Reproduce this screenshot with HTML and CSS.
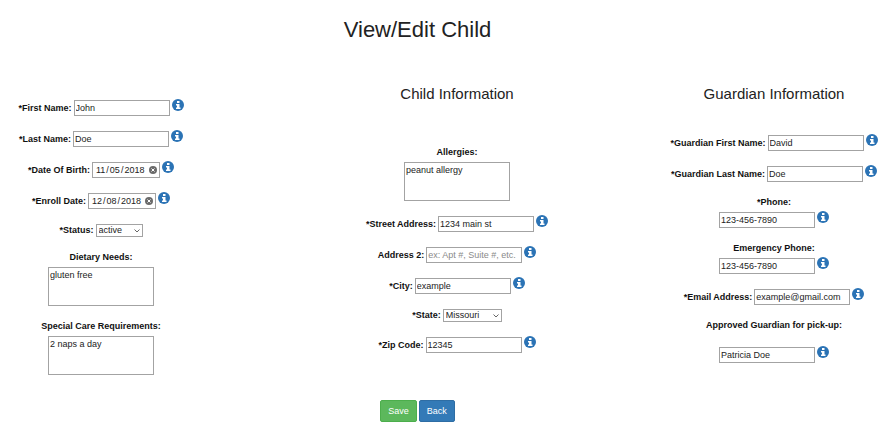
FILE: index.html
```html
<!DOCTYPE html>
<html lang="en-US">
<head>
<meta charset="utf-8">
<title>View/Edit Child</title>
<link rel="stylesheet" href="styles.css">
</head>
<body>
<svg class="sprite" aria-hidden="true">
  <symbol id="info" viewBox="0 0 24 24">
    <circle cx="12" cy="12" r="12" fill="#2b73b5"/>
    <path d="M10 4h5v4h-5zM8 10h7v7h2v3H8v-3h2v-4H8z" fill="#fff"/>
  </symbol>
  <symbol id="clear" viewBox="0 0 16 16">
    <circle cx="8" cy="8" r="8" fill="#6b6b6b"/>
    <path d="M5 5l6 6M11 5l-6 6" stroke="#fff" stroke-width="2"/>
  </symbol>
</svg>
<form class="page">
  <h1>View/Edit Child</h1>
  <div class="columns">
    <section class="column column-child">
      <div class="field"><label for="first">*First Name:</label><input id="first" type="text" value="John"><svg class="info"><use href="#info"/></svg></div>
      <div class="field"><label for="last">*Last Name:</label><input id="last" type="text" value="Doe"><svg class="info"><use href="#info"/></svg></div>
      <div class="field"><label for="dob">*Date Of Birth:</label><span class="date"><input id="dob" type="date" value="2018-11-05"><button class="clear" type="button" aria-label="Clear"><svg><use href="#clear"/></svg></button></span><svg class="info"><use href="#info"/></svg></div>
      <div class="field"><label for="enroll">*Enroll Date:</label><span class="date"><input id="enroll" type="date" value="2018-12-08"><button class="clear" type="button" aria-label="Clear"><svg><use href="#clear"/></svg></button></span><svg class="info"><use href="#info"/></svg></div>
      <div class="field field-select"><label for="status">*Status:</label><span class="picker"><select id="status"><option>active</option></select><svg class="chevron" viewBox="0 0 6 4"><path d="M.5.5L3 3 5.500.5"/></svg></span></div>
      <div class="stacked"><label for="diet">Dietary Needs:</label><textarea id="diet">gluten free</textarea></div>
      <div class="stacked"><label for="care">Special Care Requirements:</label><textarea id="care">2 naps a day</textarea></div>
    </section>
    <section class="column column-info">
      <h2>Child Information</h2>
      <div class="stacked allergies"><label for="allergies">Allergies:</label><textarea id="allergies">peanut allergy</textarea></div>
      <div class="field"><label for="street">*Street Address:</label><input id="street" type="text" value="1234 main st"><svg class="info"><use href="#info"/></svg></div>
      <div class="field"><label for="address2">Address 2:</label><input id="address2" type="text" placeholder="ex: Apt #, Suite #, etc."><svg class="info"><use href="#info"/></svg></div>
      <div class="field"><label for="city">*City:</label><input id="city" type="text" value="example"><svg class="info"><use href="#info"/></svg></div>
      <div class="field field-select"><label for="state">*State:</label><span class="picker picker-wide"><select id="state"><option>Missouri</option></select><svg class="chevron" viewBox="0 0 6 4"><path d="M.5.5L3 3 5.500.5"/></svg></span></div>
      <div class="field"><label for="zip">*Zip Code:</label><input id="zip" type="text" value="12345"><svg class="info"><use href="#info"/></svg></div>
    </section>
    <section class="column column-guardian">
      <h2>Guardian Information</h2>
      <div class="field field-first"><label for="gfirst">*Guardian First Name:</label><input id="gfirst" type="text" value="David"><svg class="info"><use href="#info"/></svg></div>
      <div class="field"><label for="glast">*Guardian Last Name:</label><input id="glast" type="text" value="Doe"><svg class="info"><use href="#info"/></svg></div>
      <div class="stacked"><label for="phone">*Phone:</label><div class="control"><input id="phone" type="tel" value="123-456-7890"><svg class="info"><use href="#info"/></svg></div></div>
      <div class="stacked"><label for="ephone">Emergency Phone:</label><div class="control"><input id="ephone" type="tel" value="123-456-7890"><svg class="info"><use href="#info"/></svg></div></div>
      <div class="field"><label for="email">*Email Address:</label><input id="email" type="email" value="example@gmail.com"><svg class="info"><use href="#info"/></svg></div>
      <div class="stacked stacked-loose"><label for="pickup">Approved Guardian for pick-up:</label><div class="control"><input id="pickup" type="text" value="Patricia Doe"><svg class="info"><use href="#info"/></svg></div></div>
    </section>
  </div>
  <div class="actions"><button class="btn btn-save" type="submit">Save</button><button class="btn btn-back" type="button">Back</button></div>
</form>
</body>
</html>
```
FILE: styles.css
```css
* { box-sizing: border-box; }
body {
  margin: 0;
  background: #fff;
  color: #222;
  font: 9px/12px "Liberation Sans", Arial, sans-serif;
}
.sprite { position: absolute; width: 0; height: 0; }
h1, h2 { margin: 0; font-weight: 400; text-align: center; }
h1 { padding: 16px 46px 0 0; font-size: 22px; line-height: 28px; }
h2 { font-size: 15px; line-height: 20px; }
.columns { display: grid; grid-template-columns: 202fr 465fr 214fr; padding-top: 40px; }
.column-child { padding-top: 16px; }
.column-info { padding-left: 45px; }

.field, .control { display: flex; justify-content: center; gap: 2px; }
.field { margin-top: 15px; }
.column-child .field:first-child { margin-top: 0; }
.column-guardian .field-first { margin-top: 31px; }
label { color: #111; font-weight: 700; white-space: nowrap; }
.field label { line-height: 16px; }
.field-select label { line-height: 13px; }

input, textarea, select {
  margin: 0;
  border: 1px solid #a3a3a3;
  border-radius: 0;
  background: #fff;
  color: #222;
  font: inherit;
}
input { width: 96px; height: 16px; padding: 0 1px; }
input::placeholder { color: #8a8a8a; }
textarea { display: block; width: 106px; height: 39px; padding: 1px; resize: none; }
.info { flex: none; width: 12px; height: 12px; margin-top: -1px; }

.date { position: relative; }
.date input { display: block; width: 68px; padding: 0 3px; }
input::-webkit-calendar-picker-indicator { display: none; }
input::-webkit-datetime-edit,
input::-webkit-datetime-edit-fields-wrapper,
input::-webkit-datetime-edit-month-field,
input::-webkit-datetime-edit-day-field,
input::-webkit-datetime-edit-year-field { padding: 0; }
input::-webkit-datetime-edit-text { padding: 0 1px; }
.clear {
  position: absolute;
  top: 4px;
  right: 3px;
  width: 8px;
  height: 8px;
  padding: 0;
  border: 0;
  background: none;
}
.clear svg { display: block; width: 8px; height: 8px; }

.picker { position: relative; width: 47px; }
.picker-wide { width: 59px; }
select { display: block; width: 100%; height: 13px; padding: 0 2px; line-height: 11px; appearance: none; }
.chevron { position: absolute; top: 5px; right: 3px; width: 6px; height: 4px; fill: none; stroke: #666; pointer-events: none; }

.stacked { display: flex; flex-direction: column; align-items: center; gap: 4px; margin-top: 14px; }
.allergies { margin-top: 42px; }
.stacked-loose { gap: 16px; }

.actions { display: flex; justify-content: center; gap: 2px; padding: 25px 46px 0 0; }
.btn {
  height: 22px;
  padding: 0 7px;
  border: 1px solid;
  border-radius: 2px;
  color: #fff;
  font: inherit;
}
.btn-save { background: #5cb85c; border-color: #4cae4c; }
.btn-back { background: #337ab7; border-color: #2e6da4; }
```
